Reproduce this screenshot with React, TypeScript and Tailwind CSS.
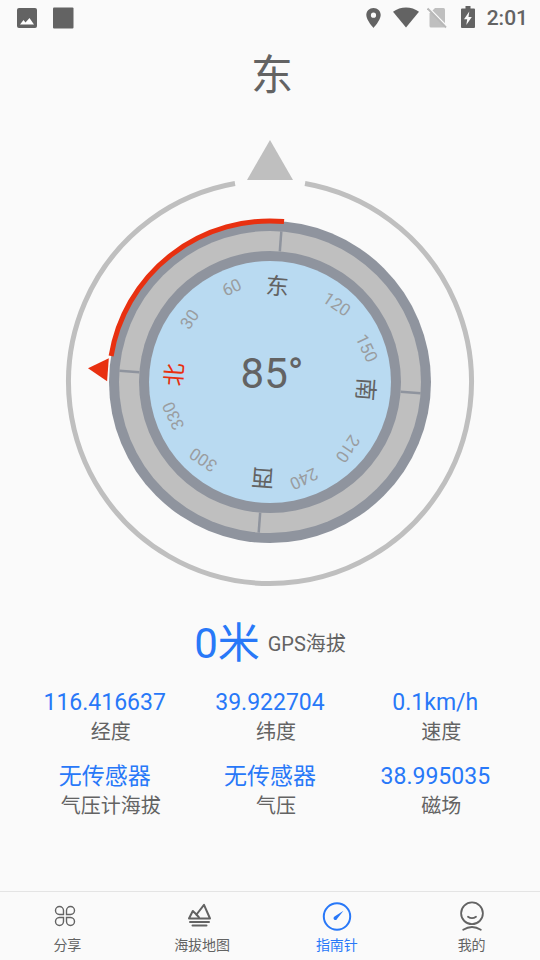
import { useState } from 'react'
import type { ReactNode } from 'react'

const HEADING = 85.7

const CARDINALS = [
  { label: '北', deg: 0, className: 'fill-[#e83010]' },
  { label: '东', deg: 90, className: 'fill-[#636363]' },
  { label: '南', deg: 180, className: 'fill-[#636363]' },
  { label: '西', deg: 270, className: 'fill-[#636363]' },
]

const DEGREES = [30, 60, 120, 150, 210, 240, 300, 330]

const READINGS = [
  { label: '经度', value: '116.416637' },
  { label: '纬度', value: '39.922704' },
  { label: '速度', value: '0.1km/h' },
  { label: '气压计海拔', value: '无传感器' },
  { label: '气压', value: '无传感器' },
  { label: '磁场', value: '38.995035' },
]

// point on a circle around the dial centre, 0deg = up, clockwise
function polar(r: number, deg: number) {
  const rad = (deg * Math.PI) / 180
  return `${(r * Math.sin(rad)).toFixed(2)} ${(-r * Math.cos(rad)).toFixed(2)}`
}

function StatusBar() {
  return (
    <header className="flex h-9 items-center justify-between pl-4 pr-3 text-[#636363]">
      <div className="flex items-center gap-3.5">
        <svg width="22" height="22" viewBox="0 0 22 22">
          <rect x="1" y="1" width="20" height="20" rx="2" fill="currentColor" />
          <path d="M4 17.500 L7.500 13 L9.500 15.500 L13.500 11 L18 17.500 Z" fill="#fff" />
        </svg>
        <svg width="22" height="22" viewBox="0 0 22 22">
          <rect x="1" y="0.500" width="20.500" height="21" rx="1" fill="currentColor" />
        </svg>
      </div>
      <div className="flex items-center">
        <svg className="mr-3" width="15" height="22" viewBox="0 0 15 22">
          <path
            d="M7.500 1C3.400 1 .3 4.100.3 8.100c0 5.200 7.200 12.900 7.200 12.900s7.200-7.700 7.200-12.900C14.700 4.100 11.600 1 7.500 1zm0 9.800a2.600 2.600 0 1 1 0-5.200 2.600 2.600 0 0 1 0 5.200z"
            fill="currentColor"
          />
        </svg>
        <svg className="mr-2" width="26" height="22" viewBox="0 0 26 22">
          <path d="M13 20.500 L0 4.800 C7.500-1 18.500-1 26 4.800 Z" fill="currentColor" />
        </svg>
        <svg className="mr-3.5" width="20" height="22" viewBox="0 0 20 22">
          <path d="M8 1h8.500q1.500 0 1.500 1.500v16.500q0 1.500-1.500 1.500H4Q2.500 20.500 2.500 19V6.500Z" fill="#bfbfbf" />
          <path d="M1.500 .5 L20 19.300" stroke="#fafafa" strokeWidth="1.600" />
          <path d="M.6 1.500 L19 20.500" stroke="#b8b8b8" strokeWidth="1.800" />
        </svg>
        <svg className="mr-3" width="14" height="24" viewBox="0 0 14 24">
          <path d="M4.500 0h5v2.500H13q1 0 1 1V21q0 1-1 1H1q-1 0-1-1V3.500q0-1 1-1h3.500Z" fill="currentColor" />
          <path d="M8.300 5.500 L3 13.300 H6.200 L5.300 19 L10.800 11 H7.500 Z" fill="#fafafa" />
        </svg>
        <time className="text-[21px] leading-none font-medium">2:01</time>
      </div>
    </header>
  )
}

function Compass() {
  return (
    <svg
      className="mx-auto block w-[412px] max-w-full"
      viewBox="-206 -244 412 450"
      role="img"
      aria-label="指南针 85°"
    >
      <path d="M0 -242 L23 -202 H-23 Z" fill="#bfbfbf" />
      <path
        d={`M${polar(201.5, 10)} A201.500 201.500 0 1 1 ${polar(201.5, 350)}`}
        fill="none"
        stroke="#bfbfbf"
        strokeWidth="5"
      />

      <circle r="161" fill="#8f949e" />
      <circle r="151" fill="#bfbfbf" />
      <circle r="131" fill="#8f949e" />
      <circle r="121" fill="#b9daf1" />

      <path
        d={`M${polar(161, -80.7)} A161 161 0 0 1 ${polar(161, 5)}`}
        fill="none"
        stroke="#e83010"
        strokeWidth="5"
      />

      <g transform={`rotate(${-HEADING})`}>
        <path d="M0 -182.500 L11.500 -162.500 H-11.500 Z" fill="#e83010" />
        {CARDINALS.map(c => (
          <g key={c.label} transform={`rotate(${c.deg})`}>
            <path d="M0 -151 V-131" stroke="#8f949e" strokeWidth="2.500" />
            <text y="-88" textAnchor="middle" className={`text-[23px] ${c.className}`}>
              {c.label}
            </text>
          </g>
        ))}
        {DEGREES.map(deg => (
          <text key={deg} x="-3" y="-96" transform={`rotate(${deg})`} className="fill-[#9a9da0] text-[17px]">
            {deg}
          </text>
        ))}
      </g>

      <text x="2" y="6" textAnchor="middle" className="fill-[#636363] text-[42px]">
        85°
      </text>
    </svg>
  )
}

function ShareIcon() {
  const petal = 'M-1.500 -1.500 H-5.600 A4 4 0 0 1 -9.500 -5.500 A4 4 0 0 1 -5.500 -9.500 A4 4 0 0 1 -1.500 -5.600 Z'
  return (
    <svg width="30" height="30" viewBox="-13 -15 30 30" fill="none" stroke="currentColor" strokeWidth="1.400">
      <path d={petal} />
      <path d={petal} transform="scale(-1 1)" />
      <path d={petal} transform="scale(1 -1)" />
      <path d={petal} transform="scale(-1 -1)" />
    </svg>
  )
}

function MountainIcon() {
  return (
    <svg
      width="30"
      height="30"
      viewBox="0 0 30 30"
      fill="none"
      stroke="currentColor"
      strokeWidth="2"
      strokeLinecap="round"
      strokeLinejoin="round"
    >
      <path d="M2 17.500 L5.800 10 L9.500 13.500 L17 3.800 L23 17.500 Z" />
      <path d="M9.500 13.500 L12 16.500" />
      <path d="M3 21 H22 M5.500 24.500 H19.500" />
    </svg>
  )
}

function CompassIcon() {
  return (
    <svg width="30" height="30" viewBox="0 0 30 30">
      <circle cx="15" cy="15.500" r="13.200" fill="none" stroke="currentColor" strokeWidth="2" />
      <path d="M21.500 9.800 L15.300 17.500 A1.900 1.900 0 1 1 12.500 15.500 Z" fill="currentColor" />
    </svg>
  )
}

function ProfileIcon() {
  return (
    <svg
      width="30"
      height="30"
      viewBox="0 0 30 30"
      fill="none"
      stroke="currentColor"
      strokeWidth="1.800"
      strokeLinecap="round"
    >
      <circle cx="15" cy="12.300" r="10.900" />
      <path d="M11 15.700 Q15 18.700 19 15.700" />
      <path d="M6.200 28.700 Q15 23.300 23.800 28.700" />
    </svg>
  )
}

const TABS: { id: string; label: string; icon: ReactNode }[] = [
  { id: 'share', label: '分享', icon: <ShareIcon /> },
  { id: 'map', label: '海拔地图', icon: <MountainIcon /> },
  { id: 'compass', label: '指南针', icon: <CompassIcon /> },
  { id: 'me', label: '我的', icon: <ProfileIcon /> },
]

export default function App() {
  const [tab, setTab] = useState('compass')

  return (
    <div className="flex min-h-screen flex-col bg-[#fafafa] font-[Roboto,'Noto_Sans_CJK_SC',sans-serif] text-[#636363]">
      <StatusBar />

      <main className="flex-1">
        <h1 className="pt-2 pb-[30px] pl-1 text-center text-[42px] leading-16 font-normal">东</h1>
        <Compass />

        <div className="mt-6 flex items-center justify-center gap-2">
          <span className="text-[42px] leading-16 text-[#2878f8]">0米</span>
          <span className="text-xl">GPS海拔</span>
        </div>

        <dl className="mt-[11px] grid grid-cols-3 gap-y-4 px-[22px] text-center">
          {READINGS.map(r => (
            <div key={r.label} className="flex flex-col-reverse">
              <dt className="pl-3 text-xl leading-[26px]">{r.label}</dt>
              <dd className="text-[23px] leading-8 text-[#2878f8]">{r.value}</dd>
            </div>
          ))}
        </dl>
      </main>

      <nav className="grid grid-cols-4 border-t border-[#e4e4e4] pr-px">
        {TABS.map(t => (
          <button
            key={t.id}
            type="button"
            aria-current={tab === t.id ? 'page' : undefined}
            onClick={() => setTab(t.id)}
            className={`flex flex-col items-center pt-[9px] pb-px text-sm ${tab === t.id ? 'text-[#2878f8]' : 'text-[#636363]'}`}
          >
            {t.icon}
            <span className="leading-7">{t.label}</span>
          </button>
        ))}
      </nav>
    </div>
  )
}
